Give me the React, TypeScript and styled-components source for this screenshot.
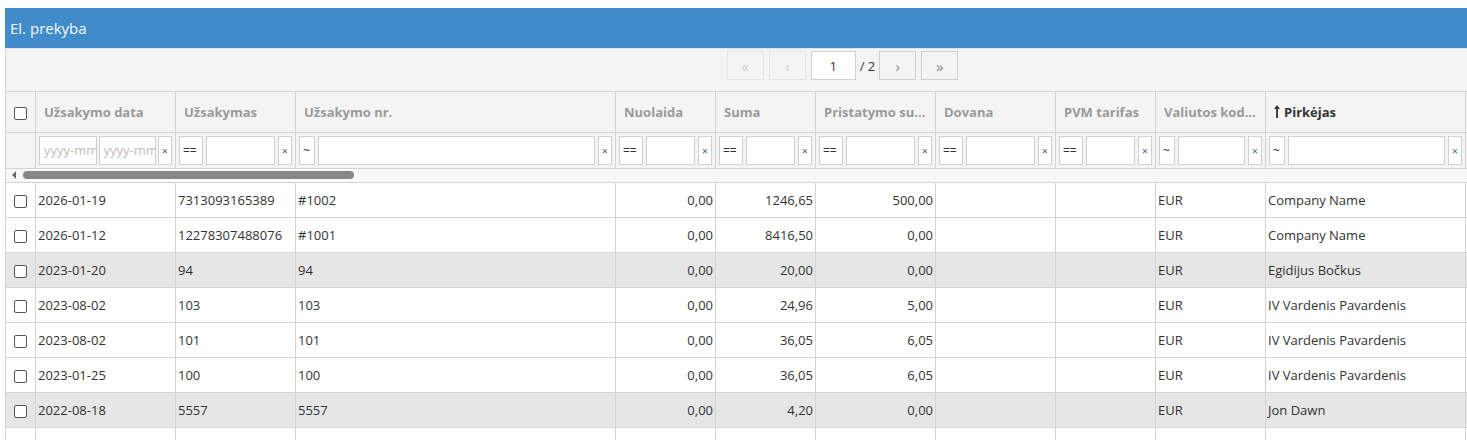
import React from "react";
import styled, { createGlobalStyle } from "styled-components";

const Global = createGlobalStyle`
  html, body { overflow: hidden; }
  body {
    margin: 8px 0 0 5px;
    font-family: "Open Sans", "Liberation Sans", sans-serif;
    font-size: 13px;
    color: #333;
    background: #fff;
  }
  * { box-sizing: border-box; }
`;

const Panel = styled.div`
  width: 1677px;
`;

const TitleBar = styled.div`
  height: 40px;
  background: #428bca;
  color: #f2f8ff;
  font-size: 15px;
  display: flex;
  align-items: center;
  padding-left: 5px;
`;

const Toolbar = styled.div`
  height: 43px;
  background: #f4f4f4;
  border: 1px solid #d4d4d4;
  border-bottom: none;
  border-top-color: #e2e2e2;
  display: flex;
  justify-content: center;
  align-items: flex-start;
  padding-top: 2px;
  padding-right: 2px;
  gap: 5px;
`;

const PageBtn = styled.button<{ $disabled?: boolean }>`
  width: 37px;
  height: 29px;
  border: 1px solid ${(p) => (p.$disabled ? "#e6e6e6" : "#cfcfcf")};
  background: #f4f4f4;
  color: ${(p) => (p.$disabled ? "#d0d0d0" : "#8a8a8a")};
  font-family: "Open Sans", sans-serif;
  font-size: 15px;
  padding: 0;
  display: flex;
  align-items: center;
  justify-content: center;
`;

const PageInput = styled.div`
  width: 45px;
  height: 29px;
  border: 1px solid #cfcfcf;
  background: #fff;
  display: flex;
  align-items: center;
  justify-content: center;
  font-size: 13px;
  color: #333;
`;

const PageTotal = styled.span`
  height: 29px;
  display: flex;
  align-items: center;
  font-size: 13px;
  color: #333;
  margin: 0 -1px;
`;

const Table = styled.table`
  border-collapse: collapse;
  table-layout: fixed;
  width: 1677px;
`;

const HeadCell = styled.th<{ $active?: boolean }>`
  height: 41px;
  background: #f4f4f4;
  border: 1px solid #d4d4d4;
  text-align: left;
  padding: 0 8px;
  font-weight: 700;
  font-size: 13px;
  color: ${(p) => (p.$active ? "#333" : "#9a9a9a")};
  white-space: nowrap;
  overflow: hidden;
  text-overflow: ellipsis;
`;

const CheckCell = styled.td`
  border: 1px solid #d4d4d4;
  text-align: center;
  padding: 0;
`;

const HeadCheckCell = styled(CheckCell)`
  background: #f4f4f4;
  height: 41px;
`;

const Box = styled.span`
  display: inline-block;
  width: 13px;
  height: 13px;
  border: 1px solid #555;
  border-radius: 2px;
  background: #fff;
  vertical-align: middle;
`;

const FilterCell = styled.td`
  height: 35px;
  background: #f4f4f4;
  border: 1px solid #d4d4d4;
  border-bottom: none;
  padding: 0 3px;
`;

const FilterRow = styled.div<{ $gap: number }>`
  display: flex;
  gap: ${(p) => p.$gap}px;
  height: 29px;
`;

const FilterInput = styled.div`
  flex: 1;
  min-width: 0;
  height: 29px;
  border: 1px solid #d0d0d0;
  background: #fff;
  color: #c4bcb4;
  font-size: 13px;
  display: flex;
  align-items: center;
  padding-left: 4px;
  overflow: hidden;
  white-space: nowrap;
`;

const OpBox = styled.div<{ $w: number }>`
  width: ${(p) => p.$w}px;
  flex: none;
  height: 29px;
  border: 1px solid #d0d0d0;
  background: #fff;
  color: #333;
  font-size: 12px;
  display: flex;
  align-items: center;
  padding-left: 3px;
`;

const ClearBtn = styled.div`
  width: 14px;
  flex: none;
  height: 29px;
  border: 1px solid #d0d0d0;
  background: #fff;
  color: #3a6a9a;
  font-size: 11px;
  display: flex;
  align-items: center;
  justify-content: center;
`;

const ScrollArea = styled.div`
  height: 14px;
  background: #f8f8f8;
  border-left: 1px solid #d4d4d4;
  border-top: 1px solid #d4d4d4;
  display: flex;
  align-items: center;
  padding-left: 6px;
  gap: 7px;
`;

const ScrollArrow = styled.span`
  width: 0;
  height: 0;
  border-top: 4px solid transparent;
  border-bottom: 4px solid transparent;
  border-right: 4px solid #6a6a6a;
`;

const ScrollThumb = styled.div`
  width: 331px;
  height: 8px;
  border-radius: 4px;
  background: #878787;
`;

const Row = styled.tr<{ $hl?: boolean }>`
  background: ${(p) => (p.$hl ? "#e6e6e6" : "#fff")};
`;

const Cell = styled.td<{ $num?: boolean }>`
  height: 35px;
  border: 1px solid #d4d4d4;
  padding: 0 ${(p) => (p.$num ? "2px" : "0")} 0 2px;
  text-align: ${(p) => (p.$num ? "right" : "left")};
  font-size: 13px;
  color: #333;
  white-space: nowrap;
  overflow: hidden;
`;

const SortIcon = () => (
  <svg width="6" height="13" viewBox="0 0 6 13" style={{ marginRight: 4, verticalAlign: -1 }}>
    <path d="M3 0 L6 4 L3.9 4 L3.9 13 L2.1 13 L2.1 4 L0 4 Z" fill="#333" />
  </svg>
);

const widths = [30, 140, 120, 320, 100, 100, 120, 120, 100, 110, 200, 217];

type Col = { title: string; kind: "date" | "num" | "text" | "none" };
const cols: Col[] = [
  { title: "Užsakymo data", kind: "date" },
  { title: "Užsakymas", kind: "num" },
  { title: "Užsakymo nr.", kind: "text" },
  { title: "Nuolaida", kind: "num" },
  { title: "Suma", kind: "num" },
  { title: "Pristatymo su...", kind: "num" },
  { title: "Dovana", kind: "num" },
  { title: "PVM tarifas", kind: "num" },
  { title: "Valiutos kod...", kind: "text" },
  { title: "Pirkėjas", kind: "text" },
  { title: "", kind: "none" },
];

const rows = [
  ["2026-01-19", "7313093165389", "#1002", "0,00", "1246,65", "500,00", "", "", "EUR", "Company Name"],
  ["2026-01-12", "12278307488076", "#1001", "0,00", "8416,50", "0,00", "", "", "EUR", "Company Name"],
  ["2023-01-20", "94", "94", "0,00", "20,00", "0,00", "", "", "EUR", "Egidijus Bočkus"],
  ["2023-08-02", "103", "103", "0,00", "24,96", "5,00", "", "", "EUR", "IV Vardenis Pavardenis"],
  ["2023-08-02", "101", "101", "0,00", "36,05", "6,05", "", "", "EUR", "IV Vardenis Pavardenis"],
  ["2023-01-25", "100", "100", "0,00", "36,05", "6,05", "", "", "EUR", "IV Vardenis Pavardenis"],
  ["2022-08-18", "5557", "5557", "0,00", "4,20", "0,00", "", "", "EUR", "Jon Dawn"],
  ["", "", "", "", "", "", "", "", "", ""],
];
const highlighted = [2, 6];
const numericCols = [3, 4, 5];

const Colgroup = () => (
  <colgroup>
    {widths.map((w, i) => (
      <col key={i} style={{ width: w }} />
    ))}
  </colgroup>
);

const Filter = ({ kind }: { kind: Col["kind"] }) => {
  if (kind === "none") return <FilterCell />;
  if (kind === "date")
    return (
      <FilterCell>
        <FilterRow $gap={2}>
          <FilterInput>yyyy-mm-dd</FilterInput>
          <FilterInput>yyyy-mm-dd</FilterInput>
          <ClearBtn>×</ClearBtn>
        </FilterRow>
      </FilterCell>
    );
  return (
    <FilterCell>
      <FilterRow $gap={3}>
        <OpBox $w={kind === "num" ? 24 : 16}>{kind === "num" ? "==" : "~"}</OpBox>
        <FilterInput />
        <ClearBtn>×</ClearBtn>
      </FilterRow>
    </FilterCell>
  );
};

export default function App() {
  return (
    <>
      <Global />
      <Panel>
        <TitleBar>El. prekyba</TitleBar>
        <Toolbar>
          <PageBtn $disabled>«</PageBtn>
          <PageBtn $disabled>‹</PageBtn>
          <PageInput>1</PageInput>
          <PageTotal>/ 2</PageTotal>
          <PageBtn>›</PageBtn>
          <PageBtn>»</PageBtn>
        </Toolbar>
        <Table>
          <Colgroup />
          <thead>
            <tr>
              <HeadCheckCell>
                <Box />
              </HeadCheckCell>
              {cols.map((c, i) => (
                <HeadCell key={i} $active={c.title === "Pirkėjas"}>
                  {c.title === "Pirkėjas" && <SortIcon />}
                  {c.title}
                </HeadCell>
              ))}
            </tr>
            <tr>
              <FilterCell />
              {cols.map((c, i) => (
                <Filter key={i} kind={c.kind} />
              ))}
            </tr>
          </thead>
        </Table>
        <ScrollArea>
          <ScrollArrow />
          <ScrollThumb />
        </ScrollArea>
        <Table>
          <Colgroup />
          <tbody>
            {rows.map((r, ri) => (
              <Row key={ri} $hl={highlighted.includes(ri)}>
                <CheckCell>{r[0] !== "" && <Box />}</CheckCell>
                {r.map((v, ci) => (
                  <Cell key={ci} $num={numericCols.includes(ci)}>
                    {v}
                  </Cell>
                ))}
                <Cell />
              </Row>
            ))}
          </tbody>
        </Table>
      </Panel>
    </>
  );
}
